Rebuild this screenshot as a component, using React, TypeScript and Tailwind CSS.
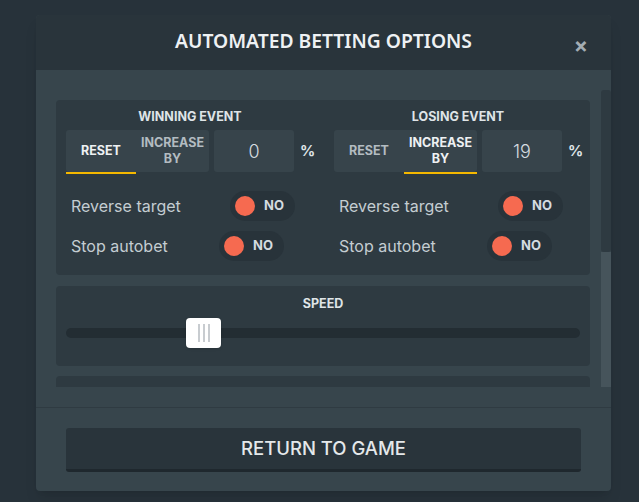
import { useState } from 'react';

type Mode = 'reset' | 'increase';

function Toggle() {
  return (
    <div className="flex h-[30px] w-[65px] shrink-0 items-center rounded-full bg-[#28333a] pl-[5px]">
      <span className="h-[20px] w-[20px] rounded-full bg-[#f66a50]" />
      <span className="ml-[9px] text-[13px] font-bold text-[#d5dce0]">NO</span>
    </div>
  );
}

function EventColumn({ title, mode, value }: { title: string; mode: Mode; value: string }) {
  const tab = (active: boolean) =>
    `relative flex h-full items-center justify-center text-center text-[12.5px] font-bold leading-[16px] ${
      active ? 'text-[#eef1f3]' : 'text-[#b3bcc1]'
    }`;
  return (
    <div className="flex w-[248px] shrink-0 flex-col">
      <div className="pt-[4px] text-center text-[12.5px] font-bold leading-[26px] text-[#dfe4e7]">{title}</div>
      <div className="flex items-center">
        <div className="flex h-[42px] w-[143px] shrink-0 rounded-[3px] bg-[#37444b]">
          <div className={`${tab(mode === 'reset')} w-[70px]`}>
            RESET
            {mode === 'reset' && <span className="absolute bottom-[-2px] left-0 right-0 h-[2px] bg-[#f5b800]" />}
          </div>
          <div className={`${tab(mode === 'increase')} w-[73px]`}>
            INCREASE
            <br />
            BY
            {mode === 'increase' && <span className="absolute bottom-[-2px] left-0 right-0 h-[2px] bg-[#f5b800]" />}
          </div>
        </div>
        <div className="ml-[5px] flex h-[42px] w-[80px] shrink-0 items-center justify-center rounded-[3px] bg-[#37444b] text-[18px] font-light text-[#d5dce0]">
          {value}
        </div>
        <span className="ml-[6px] shrink-0 text-[15px] font-bold text-[#dfe4e7]">%</span>
      </div>
      <div className="mt-[19px] flex flex-col gap-[10px] pl-[5px]">
        <div className="flex items-center">
          <span className="w-[159px] shrink-0 text-[16px] text-[#c4cdd2]">Reverse target</span>
          <Toggle />
        </div>
        <div className="flex items-center">
          <span className="w-[148px] shrink-0 text-[16px] text-[#c4cdd2]">Stop autobet</span>
          <Toggle />
        </div>
      </div>
    </div>
  );
}

export default function App() {
  const [speed] = useState(24);
  return (
    <div
      className="flex h-[502px] w-[639px] items-start bg-[#27323a] pl-[36px] pt-[15px]"
      style={{ fontFamily: 'Inter, "Noto Sans", sans-serif' }}
    >
      <div className="flex h-[476px] w-[575px] flex-col overflow-hidden rounded-[4px] bg-[#37454c] shadow-lg">
        {/* header */}
        <div className="relative flex h-[55px] items-center justify-center bg-[#29343b] pb-[3px]">
          <h1
            className="text-[19.3px] font-semibold text-[#eef1f3]"
            style={{ fontFamily: '"Noto Sans", sans-serif' }}
          >
            AUTOMATED BETTING OPTIONS
          </h1>
          <span className="absolute right-[23px] top-[15px] text-[21px] font-bold text-[#a3adb3]">×</span>
        </div>

        {/* scroll body */}
        <div className="flex h-[337px] py-[20px]">
          <div className="flex flex-1 flex-col gap-[10px] overflow-hidden pl-[20px] pr-[11px] pt-[10px]">
            <div className="flex shrink-0 justify-between overflow-visible rounded-[4px] bg-[#2e3a41] pb-[14px] pl-[10px] pr-[8px]">
              <EventColumn title="WINNING EVENT" mode="reset" value="0" />
              <EventColumn title="LOSING EVENT" mode="increase" value="19" />
            </div>

            <div className="mt-[1px] flex h-[80px] shrink-0 flex-col rounded-[4px] bg-[#2e3a41] px-[10px]">
              <div className="pt-[9px] text-center text-[12.5px] font-bold text-[#dfe4e7]">SPEED</div>
              <div className="relative mt-[14px] h-[10px] rounded-full bg-[#232d33]">
                <div
                  className="absolute top-[-10px] flex h-[30px] w-[35px] items-center justify-center gap-[3px] rounded-[4px] bg-white shadow"
                  style={{ left: `${speed * 5}px` }}
                >
                  <span className="h-[18px] w-[2px] bg-[#c8ccd0]" />
                  <span className="h-[18px] w-[2px] bg-[#c8ccd0]" />
                  <span className="h-[18px] w-[2px] bg-[#c8ccd0]" />
                </div>
              </div>
            </div>

            <div className="h-[60px] shrink-0 rounded-[4px] bg-[#2e3a41]" />
          </div>
          <div className="flex w-[10px] flex-col">
            <div className="h-[162px] rounded-[3px] bg-[#2e3a41]" />
            <div className="flex-1 bg-[#46545b]" />
          </div>
        </div>

        {/* footer */}
        <div className="flex flex-1 items-start border-t border-[#2f3b42] px-[30px] pt-[20px]">
          <button className="h-[44px] w-full rounded-[3px] border-b-[3px] border-[#1f282e] bg-[#29343b] text-[18.5px] font-medium text-[#e4e8ea]">
            RETURN TO GAME
          </button>
        </div>
      </div>
    </div>
  );
}
